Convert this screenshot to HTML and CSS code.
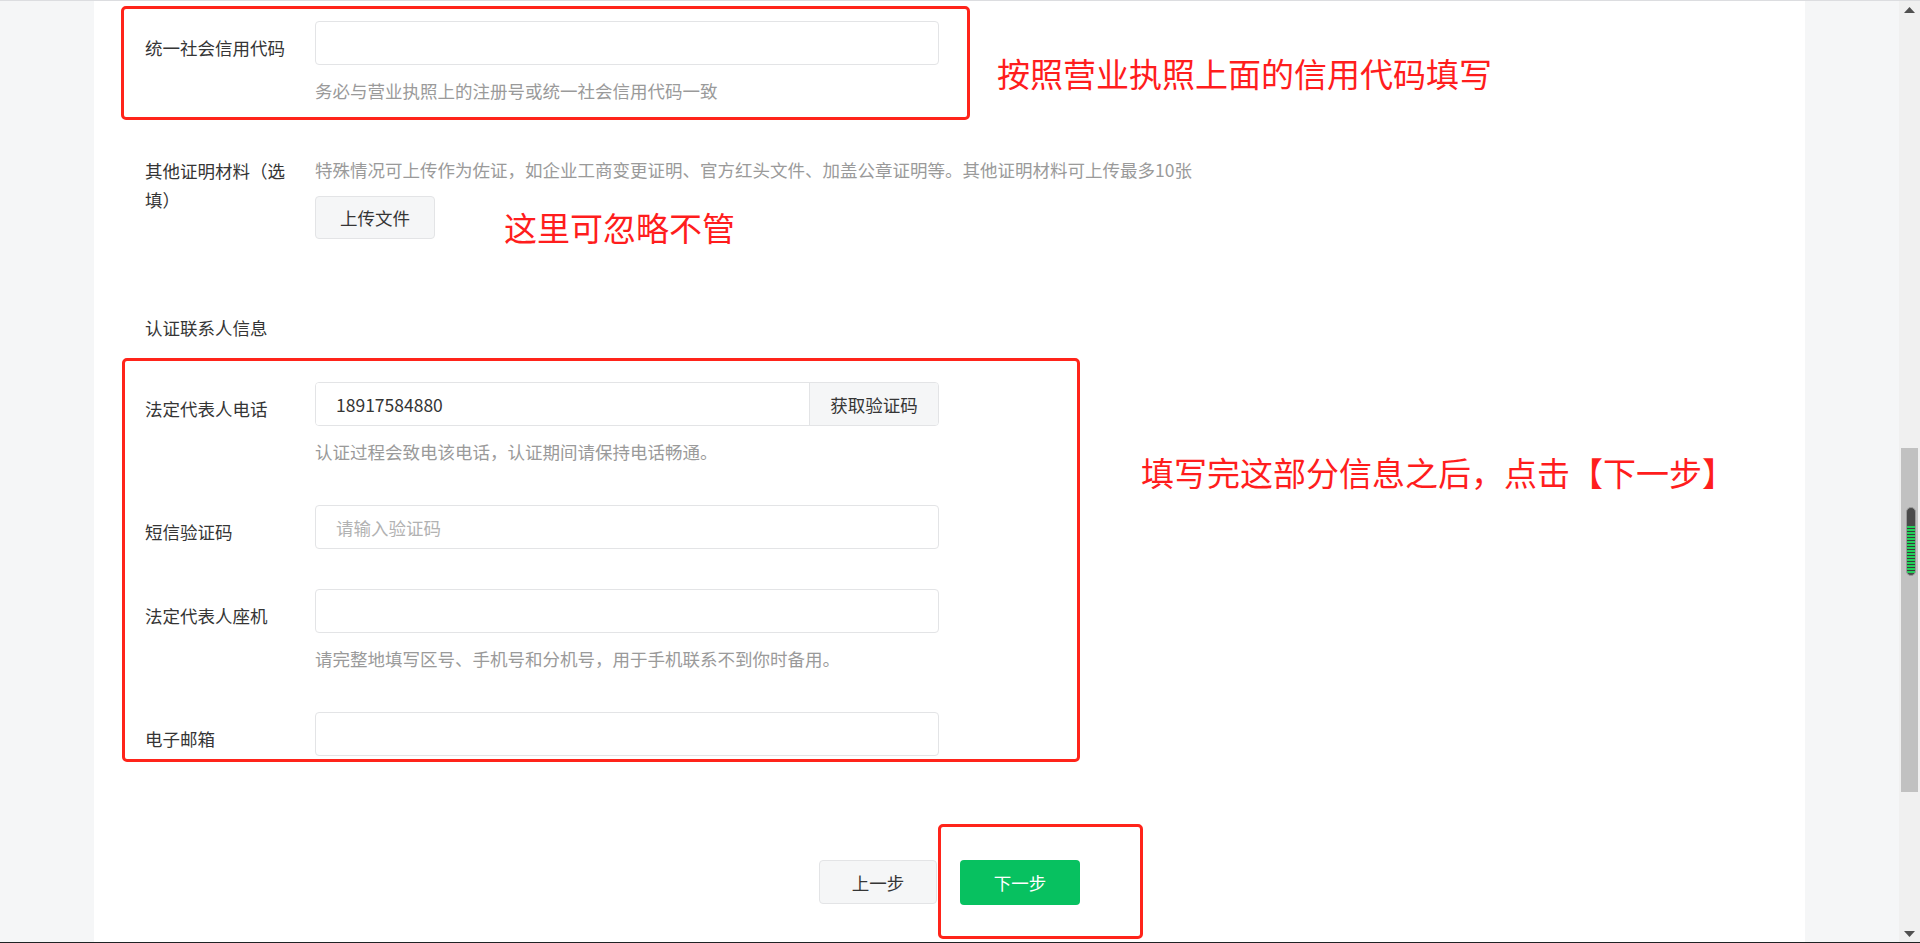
FILE: index.html
```html
<!DOCTYPE html>
<html lang="zh-CN">
<head>
    <meta charset="UTF-8">
    <meta name="viewport" content="width=device-width, initial-scale=1.0">
    <title>认证信息</title>
    <link rel="stylesheet" href="styles.css">
</head>
<body>
    <div class="top-line"></div>
    <div class="viewport">
        <div class="page">
            <div class="panel">
                <div class="row">
                    <div class="row-label">统一社会信用代码</div>
                    <div class="row-field">
                        <input class="text-input" type="text">
                        <div class="hint">务必与营业执照上的注册号或统一社会信用代码一致</div>
                    </div>
                </div>

                <div class="row">
                    <div class="row-label">其他证明材料（选填）</div>
                    <div class="row-field">
                        <div class="hint hint-top">特殊情况可上传作为佐证，如企业工商变更证明、官方红头文件、加盖公章证明等。其他证明材料可上传最多10张</div>
                        <button class="btn btn-plain btn-upload">上传文件</button>
                    </div>
                </div>

                <div class="section-title">认证联系人信息</div>

                <div class="row">
                    <div class="row-label">法定代表人电话</div>
                    <div class="row-field">
                        <div class="input-group">
                            <input class="group-input" type="text" value="18917584880">
                            <button class="group-btn">获取验证码</button>
                        </div>
                        <div class="hint">认证过程会致电该电话，认证期间请保持电话畅通。</div>
                    </div>
                </div>

                <div class="row">
                    <div class="row-label">短信验证码</div>
                    <div class="row-field">
                        <input class="text-input" type="text" placeholder="请输入验证码">
                    </div>
                </div>

                <div class="row">
                    <div class="row-label">法定代表人座机</div>
                    <div class="row-field">
                        <input class="text-input" type="text">
                        <div class="hint">请完整地填写区号、手机号和分机号，用于手机联系不到你时备用。</div>
                    </div>
                </div>

                <div class="row">
                    <div class="row-label">电子邮箱</div>
                    <div class="row-field">
                        <input class="text-input" type="text">
                    </div>
                </div>

                <div class="footer">
                    <button class="btn btn-plain btn-prev">上一步</button>
                    <button class="btn btn-primary">下一步</button>
                </div>

                <!-- 标注 -->
                <div class="mark mark-1"></div>
                <div class="note note-1">按照营业执照上面的信用代码填写</div>
                <div class="note note-2">这里可忽略不管</div>
                <div class="mark mark-2"></div>
                <div class="note note-3">填写完这部分信息之后，点击【下一步】</div>
                <div class="mark mark-3"></div>
            </div>
        </div>

        <div class="scrollbar">
            <div class="scroll-btn">
                <svg width="11" height="6" viewBox="0 0 11 6"><path d="M5.5 0 L11 6 L0 6 Z" fill="#505050"/></svg>
            </div>
            <div class="scroll-track">
                <div class="scroll-thumb"></div>
                <div class="meter"></div>
            </div>
            <div class="scroll-btn">
                <svg width="11" height="6" viewBox="0 0 11 6"><path d="M0 0 L11 0 L5.5 6 Z" fill="#505050"/></svg>
            </div>
        </div>
    </div>
    <div class="taskbar"></div>
</body>
</html>
```

FILE: styles.css
```css
body {
    margin: 0;
    height: 943px;
    overflow: hidden;
    display: flex;
    flex-direction: column;
    background: #f5f6f7;
    font-family: "Noto Sans CJK SC", "Noto Sans", sans-serif;
    font-size: 17.5px;
    color: #353535;
}

.top-line {
    height: 1px;
    background: #dcdde0;
}

.viewport {
    flex: 1;
    display: flex;
    min-height: 0;
}

.page {
    flex: 1;
    padding: 0 94px;
}

.panel {
    position: relative;
    height: 100%;
    box-sizing: border-box;
    background: #fff;
    padding: 20px 51px 0;
}

.row {
    display: flex;
    align-items: flex-start;
    margin-bottom: 40px;
}

.row-label {
    width: 144px;
    flex-shrink: 0;
    margin-right: 26px;
    padding-top: 12px;
    line-height: 29px;
}

.row-field {
    flex: 1;
}

.text-input,
.input-group {
    display: block;
    width: 624px;
    height: 44px;
    box-sizing: border-box;
    border: 1px solid #e3e4e6;
    border-radius: 4px;
    background: #fff;
}

.text-input {
    padding: 0 20px;
    font: inherit;
    color: #353535;
    outline: none;
}

.text-input::placeholder {
    color: #b2b2b2;
}

.input-group {
    display: flex;
    overflow: hidden;
}

.group-input {
    flex: 1;
    min-width: 0;
    border: none;
    padding: 0 20px;
    font: inherit;
    color: #353535;
    outline: none;
}

.group-btn {
    width: 129px;
    border: none;
    border-left: 1px solid #e3e4e6;
    background: #f5f6f7;
    font: inherit;
    color: #353535;
    padding: 0;
}

.hint {
    padding-top: 13px;
    line-height: 26px;
    color: #9a9a9a;
    white-space: nowrap;
}

.btn {
    box-sizing: border-box;
    font: inherit;
    border-radius: 4px;
    padding: 0;
    cursor: pointer;
}

.btn-plain {
    background: #f5f6f7;
    border: 1px solid #e3e4e6;
    color: #353535;
}

.btn-upload {
    display: block;
    margin-top: 13px;
    width: 120px;
    height: 43px;
}

/* 上一行的 margin-bottom 会与这里折叠 */
.section-title {
    margin: 76px 0 41px;
    line-height: 26px;
}

.footer {
    display: flex;
    justify-content: center;
    gap: 23px;
    padding-top: 64px;
}

.btn-prev {
    width: 118px;
    height: 44px;
}

.btn-primary {
    width: 120px;
    height: 45px;
    border: none;
    background: #07c160;
    color: #fff;
}

/* 红色标注 */
.mark {
    position: absolute;
    box-sizing: border-box;
    border: 3px solid #ff241a;
    border-radius: 5px;
}

.mark-1 { left: 27px; top: 5px; width: 849px; height: 114px; }
.mark-2 { left: 28px; top: 357px; width: 958px; height: 404px; }
.mark-3 { left: 844px; top: 823px; width: 205px; height: 115px; }

.note {
    position: absolute;
    font-size: 33px;
    line-height: 40px;
    color: #ff1d1d;
    white-space: nowrap;
}

.note-1 { left: 903px; top: 52px; }
.note-2 { left: 410px; top: 206px; }
.note-3 { left: 1047px; top: 451px; }

/* 滚动条 */
.scrollbar {
    width: 21px;
    display: flex;
    flex-direction: column;
    background: #f0f0f0;
}

.scroll-btn {
    height: 17px;
    display: flex;
    align-items: center;
    justify-content: center;
}

.scroll-track {
    flex: 1;
    position: relative;
    padding-top: 430px;
}

.scroll-thumb {
    margin: 0 2px;
    height: 344px;
    background: #c1c1c1;
}

.meter {
    position: absolute;
    left: 7px;
    top: 489px;
    width: 10px;
    height: 69px;
    box-sizing: border-box;
    border: 1px solid #9a9a9a;
    border-radius: 5px;
    background:
        repeating-linear-gradient(#22d05a 0 2px, #3a3a3a 2px 3px) 0 18px / 100% 47px no-repeat,
        #4a4a4a;
}

.taskbar {
    height: 1px;
    background: #1f2224;
}
```
